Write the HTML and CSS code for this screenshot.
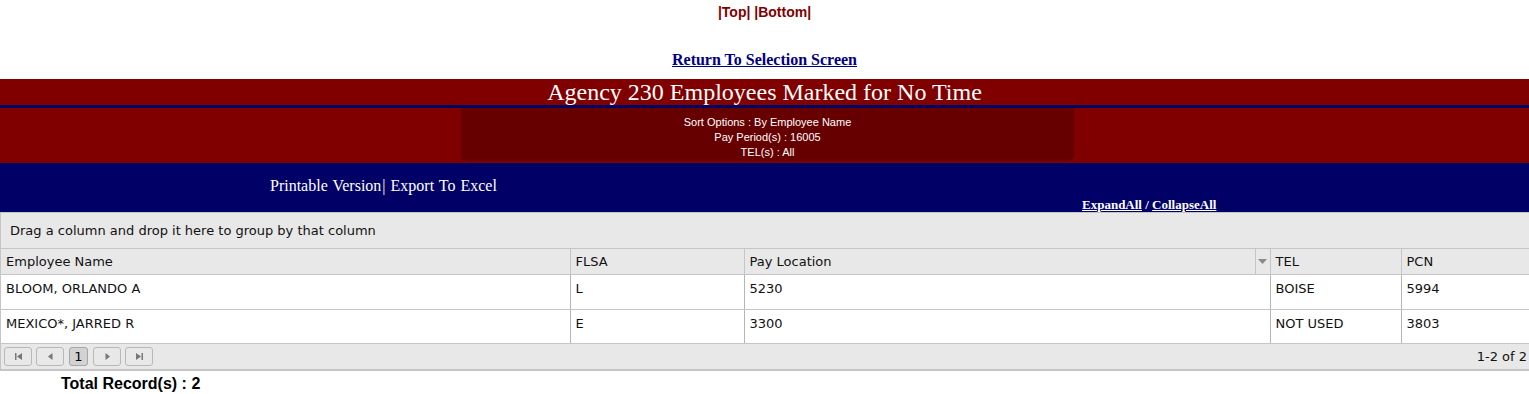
FILE: index.html
```html
<!DOCTYPE html>
<html>
<head>
<meta charset="utf-8">
<title>Agency 230 Employees Marked for No Time</title>
<link rel="stylesheet" href="styles.css">
</head>
<body>
<div class="toplinks"><a href="#">|Top|</a> <a href="#">|Bottom|</a></div>
<div class="return"><a href="#">Return To Selection Screen</a></div>

<div class="banner">
  <div class="title">Agency 230 Employees Marked for No Time</div>
  <div class="options">
    <div class="options-box">
      <div>Sort Options : By Employee Name</div>
      <div>Pay Period(s) : 16005</div>
      <div>TEL(s) : All</div>
    </div>
  </div>
</div>

<div class="toolbar">
  <div class="tools-main"><span>Printable Version</span>| <span>Export To Excel</span></div>
  <div class="tools-expand"><a href="#">ExpandAll</a> / <a href="#">CollapseAll</a></div>
</div>

<div class="grid">
  <div class="group-panel">Drag a column and drop it here to group by that column</div>
  <table class="data">
    <colgroup>
      <col class="c-name"><col class="c-flsa"><col class="c-loc"><col class="c-tel"><col class="c-pcn">
    </colgroup>
    <thead>
      <tr>
        <th>Employee Name</th>
        <th>FLSA</th>
        <th class="has-filter"><span>Pay Location</span><span class="filter"><svg width="9" height="5" viewBox="0 0 9 5"><path d="M0 0H9L4.5 5Z" fill="#8a8a8a"/></svg></span></th>
        <th>TEL</th>
        <th>PCN</th>
      </tr>
    </thead>
    <tbody>
      <tr class="row1">
        <td>BLOOM, ORLANDO A</td>
        <td>L</td>
        <td>5230</td>
        <td>BOISE</td>
        <td>5994</td>
      </tr>
      <tr class="row2">
        <td>MEXICO*, JARRED R</td>
        <td>E</td>
        <td>3300</td>
        <td>NOT USED</td>
        <td>3803</td>
      </tr>
    </tbody>
  </table>
  <div class="pager">
    <div class="pager-buttons">
      <span class="pbtn"><svg width="9" height="9" viewBox="0 0 9 9"><rect x="1" y="1" width="1.5" height="7" fill="#777"/><path d="M8 1V8L3 4.5Z" fill="#777"/></svg></span>
      <span class="pbtn"><svg width="9" height="9" viewBox="0 0 9 9"><path d="M6.5 1V8L2 4.5Z" fill="#777"/></svg></span>
      <span class="pbtn current">1</span>
      <span class="pbtn"><svg width="9" height="9" viewBox="0 0 9 9"><path d="M2.5 1V8L7 4.5Z" fill="#777"/></svg></span>
      <span class="pbtn"><svg width="9" height="9" viewBox="0 0 9 9"><path d="M1 1V8L6 4.5Z" fill="#777"/><rect x="6.5" y="1" width="1.5" height="7" fill="#777"/></svg></span>
    </div>
    <div class="pager-info">1-2 of 2</div>
  </div>
</div>

<div class="total">Total Record(s) : 2</div>
</body>
</html>
```

FILE: styles.css
```css
html, body {
  margin: 0;
  padding: 0;
  background: #ffffff;
}

body {
  font-family: "Liberation Serif", "Times New Roman", serif;
  color: #000;
}

.toplinks {
  padding-top: 4px;
  text-align: center;
  font-family: "Liberation Sans", Arial, sans-serif;
  font-weight: bold;
  font-size: 14px;
  line-height: 16px;
}

.toplinks a {
  color: #800000;
  text-decoration: none;
}

.return {
  margin-top: 31px;
  text-align: center;
  font-weight: bold;
  font-size: 16px;
  line-height: 18px;
}

.return a {
  color: #000080;
  text-decoration: underline;
}

.banner {
  margin-top: 10px;
  background: #800000;
  color: #ffffff;
}

.title {
  height: 26px;
  line-height: 26px;
  text-align: center;
  font-size: 24px;
  border-bottom: 3px solid #000066;
}

.options {
  padding: 0 0 2px 6px;
}

.options-box {
  width: 613px;
  margin: 0 auto;
  background: #660000;
  border-radius: 0 0 6px 6px;
  padding: 7px 0 1px;
  text-align: center;
  font-family: "Liberation Sans", Arial, sans-serif;
  font-size: 11px;
  line-height: 15px;
}

.toolbar {
  background: #000066;
  color: #ffffff;
  display: grid;
  grid-template-columns: 270px 812px 1fr;
  height: 49px;
}

.tools-main {
  grid-column: 2 / 4;
  grid-row: 1;
  padding-top: 14px;
  font-size: 16px;
  line-height: 18px;
  word-spacing: 1px;
}

.tools-main span {
  margin-right: 1px;
}

.tools-expand {
  grid-column: 3;
  grid-row: 2;
  margin-top: 3px;
  font-weight: bold;
  font-size: 13px;
  line-height: 14px;
}

.tools-expand a {
  color: #ffffff;
  text-decoration: underline;
}

.grid {
  border: 1px solid #c5c5c5;
  border-right: none;
  font-family: "DejaVu Sans", Verdana, sans-serif;
  font-size: 13px;
  color: #111;
}

.group-panel {
  background: #e8e8e8;
  height: 35px;
  line-height: 35px;
  padding-left: 9px;
  border-bottom: 1px solid #c5c5c5;
}

.data {
  width: 100%;
  border-collapse: collapse;
  table-layout: fixed;
}

.c-name { width: 569px; }
.c-flsa { width: 174px; }
.c-loc { width: 526px; }
.c-tel { width: 131px; }

.data th {
  box-sizing: border-box;
  height: 25px;
  padding: 0 5px;
  background: #e8e8e8;
  text-align: left;
  font-weight: normal;
  border-left: 1px solid #c5c5c5;
  border-bottom: 1px solid #c5c5c5;
  white-space: nowrap;
}

.data th:first-child,
.data td:first-child {
  border-left: none;
  padding-left: 5px;
}

.data th.has-filter {
  position: relative;
}

.filter {
  position: absolute;
  right: 0;
  top: 0;
  bottom: 0;
  width: 14px;
  border-left: 1px solid #c5c5c5;
  display: flex;
  align-items: center;
  justify-content: center;
}

.data td {
  box-sizing: border-box;
  padding: 6px 5px 0;
  vertical-align: top;
  line-height: 16px;
  border-left: 1px solid #b5b5b5;
  border-bottom: 1px solid #c5c5c5;
  background: #ffffff;
  white-space: nowrap;
}

.data .row1 td {
  height: 35px;
}

.data .row2 td {
  height: 34px;
}

.pager {
  background: #e8e8e8;
  height: 25px;
  border-bottom: 1px solid #c5c5c5;
  display: flex;
  align-items: center;
  justify-content: space-between;
  padding: 0 2px 0 3px;
}

.pager-buttons {
  display: flex;
  align-items: center;
  gap: 4px;
}

.pbtn {
  box-sizing: border-box;
  width: 28px;
  height: 19px;
  border: 1px solid #b8b8b8;
  border-radius: 3px;
  background: #e8e8e8;
  display: flex;
  align-items: center;
  justify-content: center;
}

.pbtn.current {
  width: 19px;
  margin: 0 1px;
  background: #d2d2d2;
  border-color: #a6a6a6;
  color: #000;
  font-size: 13px;
}

.pager-info {
  font-size: 13px;
}

.total {
  margin-top: 4px;
  padding-left: 61px;
  font-family: "Liberation Sans", Arial, sans-serif;
  font-weight: bold;
  font-size: 16px;
  line-height: 18px;
}
```
